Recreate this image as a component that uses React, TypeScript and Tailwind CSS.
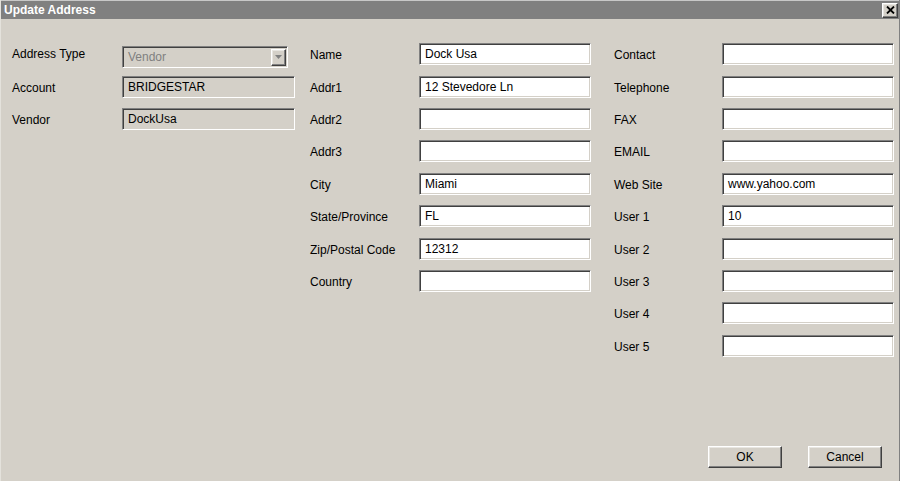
import React from "react";

const sunken =
  "border border-t-[#808080] border-l-[#808080] border-b-white border-r-white shadow-[inset_1px_1px_0_#404040,inset_-1px_-1px_0_#d4d0c8]";
const raised =
  "border border-t-white border-l-white border-b-[#404040] border-r-[#404040] shadow-[inset_-1px_-1px_0_#808080,inset_1px_1px_0_#e8e6e1]";

function Field({ value = "", readOnly = false, width = "w-[172px]" }: { value?: string; readOnly?: boolean; width?: string }) {
  return (
    <div
      className={`${sunken} ${width} h-[22px] flex items-center px-[5px] text-[12px] text-black ${
        readOnly ? "bg-[#d4d0c8]" : "bg-white"
      }`}
    >
      {value}
    </div>
  );
}

function Row({ label, children, labelW }: { label: string; children: React.ReactNode; labelW: string }) {
  return (
    <div className="flex items-center h-[32.4px]">
      <div className={`${labelW} text-[12px] text-black pt-[2px]`}>{label}</div>
      {children}
    </div>
  );
}

const middle = [
  ["Name", "Dock Usa"],
  ["Addr1", "12 Stevedore Ln"],
  ["Addr2", ""],
  ["Addr3", ""],
  ["City", "Miami"],
  ["State/Province", "FL"],
  ["Zip/Postal Code", "12312"],
  ["Country", ""],
];

const right = [
  ["Contact", ""],
  ["Telephone", ""],
  ["FAX", ""],
  ["EMAIL", ""],
  ["Web Site", "www.yahoo.com"],
  ["User 1", "10"],
  ["User 2", ""],
  ["User 3", ""],
  ["User 4", ""],
  ["User 5", ""],
];

export default function App() {
  return (
    <div
      className="w-[900px] h-[481px] flex flex-col bg-[#d4d0c8] border-l border-l-[#e4e2dc] border-r border-r-[#808080] overflow-hidden"
      style={{ fontFamily: '"Liberation Sans", Arial, sans-serif' }}
    >
      {/* title bar */}
      <div className="h-[19px] bg-[#808080] border-t border-t-[#c8c8c8] flex items-center justify-between pl-[3px] pr-[1px]">
        <span className="text-white font-bold text-[12px]">Update Address</span>
        <div className={`${raised} bg-[#d4d0c8] w-[16px] h-[15px] flex items-center justify-center`}>
          <svg width="9" height="8" viewBox="0 0 9 8">
            <path d="M1 0.5 L8 7.5 M8 0.5 L1 7.5" stroke="black" strokeWidth="1.8" />
          </svg>
        </div>
      </div>

      <div className="flex-1 flex flex-col">
        <div className="flex-1 flex pt-[19px] pl-[11px]">
          {/* left column */}
          <div className="w-[284px]">
            <div className="flex items-center h-[32.4px]">
              <div className="w-[110px] text-[12px] text-black">Address Type</div>
              <div className={`${sunken} w-[166px] h-[22px] mt-[6px] flex items-center justify-between pl-[5px] pr-[1px] bg-[#d4d0c8]`}>
                <span className="text-[12px] text-[#808080]">Vendor</span>
                <div className={`${raised} bg-[#d4d0c8] w-[15px] h-[17px] flex items-center justify-center`}>
                  <svg width="7" height="4" viewBox="0 0 7 4">
                    <path d="M0 0 H7 L3.5 4 Z" fill="#808080" />
                  </svg>
                </div>
              </div>
            </div>
            <Row label="Account" labelW="w-[110px]">
              <Field value="BRIDGESTAR" readOnly width="w-[173px]" />
            </Row>
            <Row label="Vendor" labelW="w-[110px]">
              <Field value="DockUsa" readOnly width="w-[173px]" />
            </Row>
          </div>

          {/* middle column */}
          <div className="ml-[14px] w-[281px]">
            {middle.map(([l, v]) => (
              <Row key={l} label={l} labelW="w-[109px]">
                <Field value={v} />
              </Row>
            ))}
          </div>

          {/* right column */}
          <div className="ml-[23px] w-[280px]">
            {right.map(([l, v]) => (
              <Row key={l} label={l} labelW="w-[108px]">
                <Field value={v} />
              </Row>
            ))}
          </div>
        </div>

        <div className="flex justify-end gap-[26px] pr-[17px] pb-[13px]">
          <button className={`${raised} bg-[#d4d0c8] w-[74px] h-[22px] text-[12px] text-black`}>OK</button>
          <button className={`${raised} bg-[#d4d0c8] w-[74px] h-[22px] text-[12px] text-black`}>Cancel</button>
        </div>
      </div>
    </div>
  );
}
